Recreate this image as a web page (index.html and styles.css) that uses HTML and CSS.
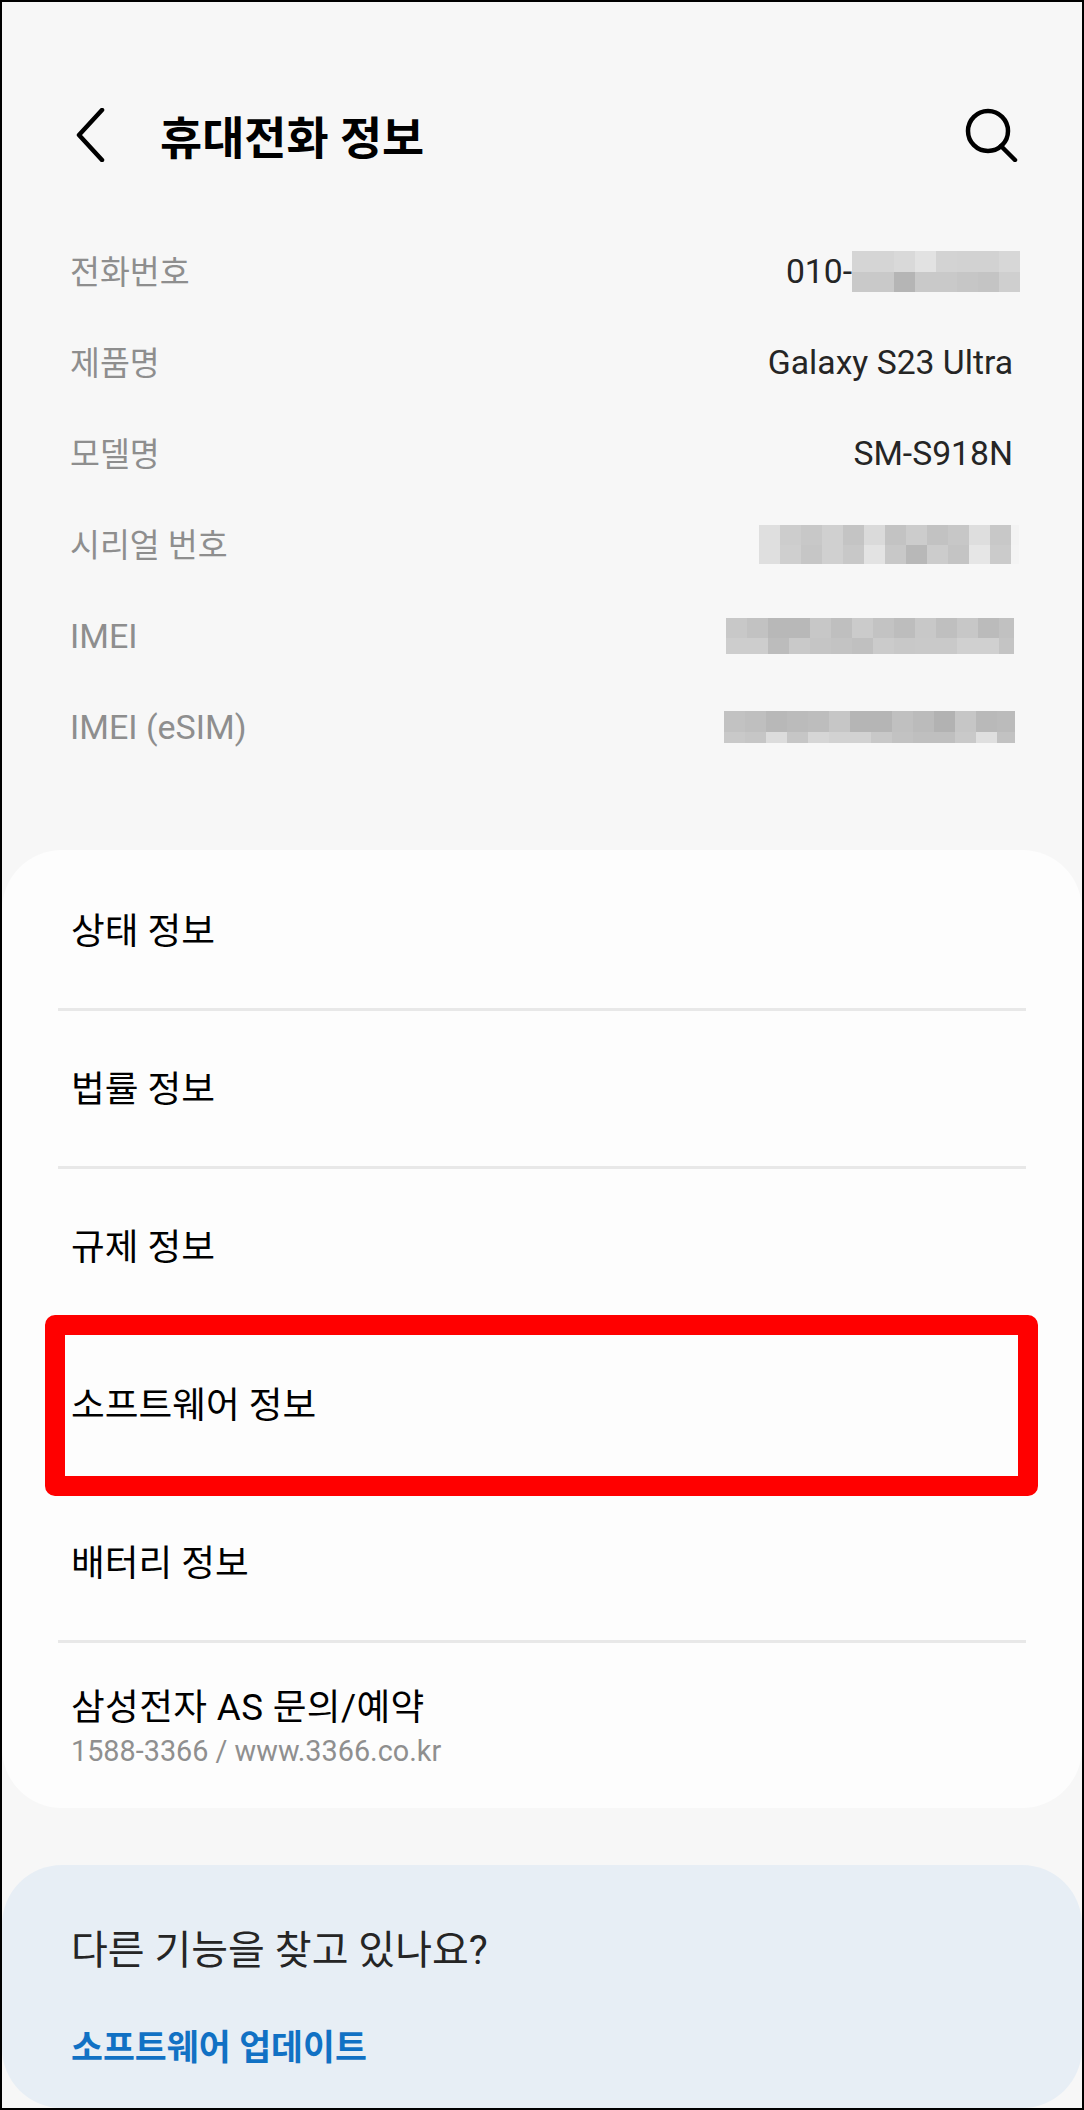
FILE: index.html
```html
<!DOCTYPE html>
<html lang="ko">
<head>
    <meta charset="UTF-8">
    <title>휴대전화 정보</title>
    <link rel="stylesheet" href="styles.css">
</head>
<body>
    <div class="phone">
        <div class="topbar">
            <svg class="icon-back" viewBox="0 0 30 54"><path d="M27 2 L4 27 L27 52"/></svg>
            <h1 class="title">휴대전화 정보</h1>
            <svg class="icon-search" viewBox="0 0 54 54"><circle cx="23" cy="23" r="20"/><path d="M36 38 L50 52"/></svg>
        </div>

        <div class="info-list">
            <div class="info-row">
                <span class="info-label">전화번호</span>
                <span class="info-value">010-<span class="mosaic mosaic-phone" data-rows="d5 d5 d9 e2 d3 d2 d2 d7|c9 c9 b5 c9 c9 c6 c4 cf"></span></span>
            </div>
            <div class="info-row">
                <span class="info-label">제품명</span>
                <span class="info-value">Galaxy S23 Ultra</span>
            </div>
            <div class="info-row">
                <span class="info-label">모델명</span>
                <span class="info-value">SM-S918N</span>
            </div>
            <div class="info-row">
                <span class="info-label">시리얼 번호</span>
                <span class="mosaic mosaic-serial" data-rows="df cd c8 d0 c4 da c3 cc c2 c7 de c8 f3|df cf c6 d0 c8 e3 c8 b8 cc c4 e6 cb f4"></span>
            </div>
            <div class="info-row">
                <span class="info-label info-label-latin">IMEI</span>
                <span class="mosaic mosaic-imei" data-rows="c8 c2 b8 b8 c7 bf cb c3 bd c8 bf c7 bb c1|cd cd bc c9 c5 c3 c0 cb c8 c9 c9 d0 d0 c4"></span>
            </div>
            <div class="info-row">
                <span class="info-label info-label-latin">IMEI (eSIM)</span>
                <span class="mosaic mosaic-esim" data-rows="c2 bf b8 bb bd c6 b5 b5 c0 bb b2 c6 b9 bb|c9 c6 dc c6 d6 d2 d2 c8 c2 bf bf c9 df c2"></span>
            </div>
        </div>

        <div class="menu-card">
            <div class="menu-item">상태 정보</div>
            <div class="menu-item">법률 정보</div>
            <div class="menu-item">규제 정보</div>
            <div class="menu-item">소프트웨어 정보</div>
            <div class="menu-item">배터리 정보</div>
            <div class="menu-item menu-item-last">
                <div class="menu-name-wide">삼성전자 AS 문의/예약</div>
                <div class="menu-sub">1588-3366 / www.3366.co.kr</div>
            </div>
            <div class="highlight"></div>
        </div>

        <div class="suggest-card">
            <div class="suggest-title">다른 기능을 찾고 있나요?</div>
            <div class="suggest-link">소프트웨어 업데이트</div>
        </div>
    </div>
    <script src="mosaic.js"></script>
</body>
</html>
```

FILE: styles.css
```css
* { box-sizing: border-box; }
body {
    margin: 0;
    font-family: Roboto, "Noto Sans CJK KR", sans-serif;
}
.phone {
    width: 1084px;
    height: 2110px;
    border: 2px solid #000;
    background: #f7f7f7;
    overflow: hidden;
}
.topbar {
    display: flex;
    align-items: center;
    height: 224px;
    padding: 103px 63px 62px 73px;
}
.icon-back {
    width: 30px;
    height: 54px;
    margin-right: 55px;
}
.icon-back path, .icon-search path, .icon-search circle {
    fill: none;
    stroke: #000;
    stroke-width: 4.5;
    stroke-linecap: round;
    stroke-linejoin: round;
}
.icon-search {
    width: 54px;
    height: 54px;
    margin-left: auto;
}
.title {
    margin: 0;
    font-size: 45.8px;
    font-weight: 700;
    color: #000;
}
.info-row {
    display: flex;
    justify-content: space-between;
    align-items: center;
    height: 91px;
    padding: 0 69px 0 68px;
}
.info-label {
    padding-bottom: 4px;
    font-size: 32.5px;
    color: #8e8e8e;
}
.info-label-latin {
    padding-bottom: 0;
    font-size: 34px;
}
.info-value {
    display: flex;
    align-items: center;
    font-size: 33.7px;
    color: #252525;
}
.mosaic { display: grid; }
.mosaic-phone {
    grid-template-columns: repeat(8, 21px);
    grid-template-rows: 21px 20px;
    margin-right: -7px;
}
.mosaic-serial {
    grid-template-columns: repeat(12, 21px) 8px;
    grid-template-rows: 20px 19px;
    margin-right: -6px;
}
.mosaic-imei {
    grid-template-columns: repeat(13, 21px) 15px;
    grid-template-rows: 20px 16px;
    margin-right: -1px;
}
.mosaic-esim {
    grid-template-columns: repeat(13, 21px) 18px;
    grid-template-rows: 21px 11px;
    margin-right: -2px;
}
.menu-card {
    position: relative;
    margin-top: 78px;
    height: 958px;
    background: #fdfdfd;
    border-radius: 60px;
}
.menu-item {
    position: relative;
    display: flex;
    flex-direction: column;
    justify-content: center;
    height: 158px;
    padding: 0 69px 8px;
    font-size: 36.7px;
    color: #000;
}
.menu-item:first-child {
    height: 161px;
    padding-bottom: 5px;
}
.menu-item::after {
    content: "";
    position: absolute;
    left: 56px;
    right: 56px;
    bottom: 0;
    height: 3px;
    background: #e8e8e8;
}
.menu-item-last { height: 167px; }
.menu-item-last::after { display: none; }
.menu-name-wide { letter-spacing: 0.35px; }
.menu-sub {
    margin-top: 3px;
    font-size: 28.8px;
    color: #8f8f8f;
}
.highlight {
    position: absolute;
    left: 43px;
    top: 465px;
    width: 993px;
    height: 181px;
    border: 20px solid #f00;
    border-radius: 10px;
}
.suggest-card {
    margin-top: 57px;
    height: 243px;
    padding: 53px 69px 0;
    background: #e7eef5;
    border-radius: 60px;
}
.suggest-title {
    font-size: 40px;
    color: #252525;
}
.suggest-link {
    margin-top: 44px;
    font-size: 34.7px;
    font-weight: 700;
    color: #1171c4;
}
```

FILE: mosaic.js
```js
// blurred-out values: each row is a list of grey levels
document.querySelectorAll('.mosaic').forEach(el => {
    el.dataset.rows.split('|').forEach(row => {
        row.split(' ').forEach(v => {
            const cell = document.createElement('span');
            cell.style.background = '#' + v + v + v;
            el.appendChild(cell);
        });
    });
});
```
